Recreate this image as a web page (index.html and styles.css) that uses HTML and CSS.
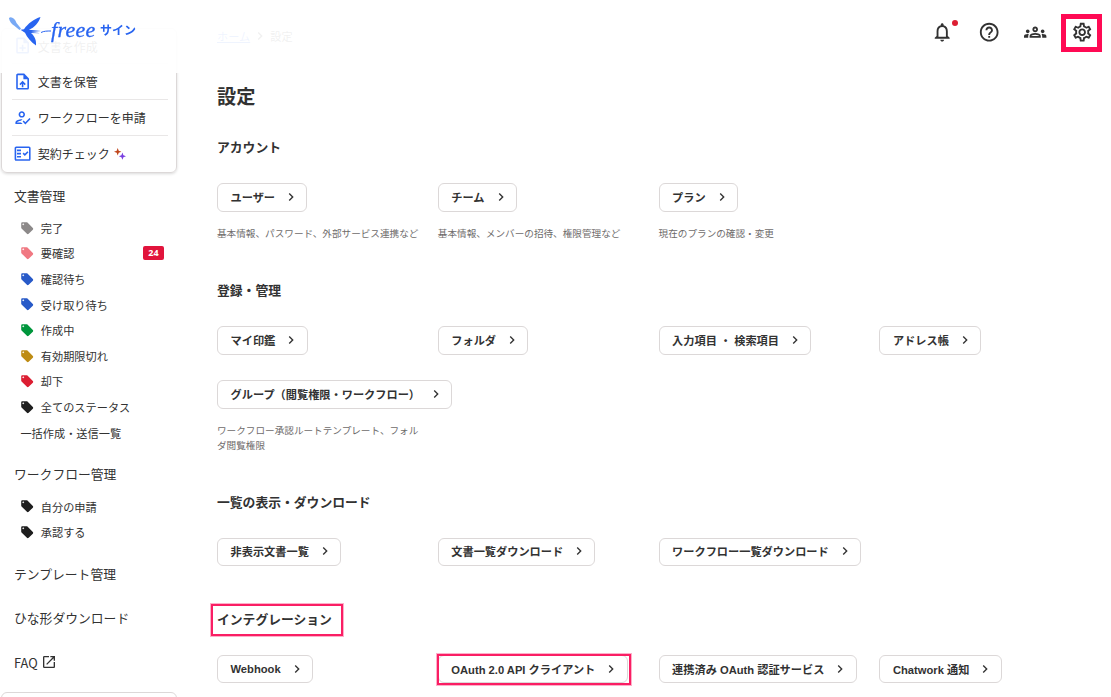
FILE: index.html
```
<!DOCTYPE html>
<html lang="ja">
<head>
<meta charset="UTF-8">
<title>設定 | freee サイン</title>
<link rel="stylesheet" href="styles.css">
</head>
<body>
<svg class="sprite" width="0" height="0">
	<symbol id="tag" viewBox="0 0 24 24"><path d="M21.41 11.58l-9-9C12.05 2.22 11.55 2 11 2H4c-1.1 0-2 .9-2 2v7c0 .55.22 1.05.59 1.42l9 9c.36.36.86.58 1.41.58s1.05-.22 1.41-.59l7-7c.37-.36.59-.86.59-1.41s-.23-1.06-.59-1.42zM5.5 7C4.67 7 4 6.33 4 5.5S4.67 4 5.5 4 7 4.67 7 5.5 6.33 7 5.5 7z"/></symbol>
	<symbol id="arrow" viewBox="0 0 24 24"><path d="M10 6L8.59 7.41 13.17 12l-4.58 4.59L10 18l6-6z"/></symbol>
	<symbol id="create" viewBox="0 0 24 24"><path d="M14 2H6c-1.1 0-2 .9-2 2v16c0 1.1.9 2 2 2h12c1.1 0 2-.9 2-2V8l-6-6zm4 18H6V4h7v5h5v11zM11 11h2v3h3v2h-3v3h-2v-3H8v-2h3z"/></symbol>
	<symbol id="upload" viewBox="0 0 24 24"><path d="M14 2H6c-1.1 0-1.99.9-1.99 2L4 20c0 1.1.89 2 1.99 2H18c1.1 0 2-.9 2-2V8l-6-6zm4 18H6V4h7v5h5v11zM8 15.01l1.41 1.41L11 14.84V19h2v-4.16l1.59 1.59L16 15.01 12.01 11 8 15.01z"/></symbol>
	<symbol id="apply" viewBox="0 0 24 24"><path d="M11 12c2.21 0 4-1.79 4-4s-1.79-4-4-4-4 1.79-4 4 1.79 4 4 4zm0-6c1.1 0 2 .9 2 2s-.9 2-2 2-2-.9-2-2 .9-2 2-2zM5 18c.2-.63 2.57-1.68 4.96-1.94l2.04-2c-.39-.04-.68-.06-1-.06-2.67 0-8 1.34-8 4v2h9l-2-2H5zm15.6-5.5l-5.13 5.17-2.07-2.08L12 17l3.47 3.5L22 13.91z"/></symbol>
	<symbol id="check" viewBox="0 0 24 24"><path d="M20 3H4c-1.1 0-2 .9-2 2v14c0 1.1.9 2 2 2h16c1.1 0 2-.9 2-2V5c0-1.1-.9-2-2-2zm0 16H4V5h16v14zM19.41 10.42L17.99 9l-3.17 3.17-1.41-1.42L12 12.16 14.82 15zM5 7h5v2H5zM5 11h5v2H5zM5 15h5v2H5z"/></symbol>
</svg>

<header class="header">
	<a class="logo">
		<svg class="bird" viewBox="0 0 42 32" width="42" height="32">
			<path fill="#78a9f5" d="M0 3C2 1 6 3.500 7.500 8l4.500 5.500-1.500 1.500L5 10.500C2.500 9 .5 6 0 3.500z"/>
			<path fill="#2864f0" d="M11.500 14.800L15 14.200C19 8.500 25 4 31.500 2 29.500 8 25.500 12.500 20 14.800l12 1.200-10 1 10 1.200-10-.2c4 3.500 5.500 7.500 5 12.500C22 27 18 22.500 16 17.800z"/>
			<path fill="none" stroke="#2864f0" stroke-width="1" d="M32 17.500c3-1.500 6-1.500 10-1.500"/>
		</svg>
		<span class="logo-name">freee</span>
		<span class="logo-sub">サイン</span>
	</a>
	<nav class="tools">
		<span class="tool">
			<svg viewBox="0 0 24 24"><path d="M12 22c1.1 0 2-.9 2-2h-4c0 1.1.89 2 2 2zm6-6v-5c0-3.07-1.64-5.64-4.5-6.32V4c0-.83-.67-1.5-1.5-1.5s-1.5.67-1.5 1.5v.68C7.63 5.36 6 7.92 6 11v5l-2 2v1h16v-1l-2-2zm-2 1H8v-6c0-2.48 1.51-4.5 4-4.5s4 2.02 4 4.5v6z"/></svg>
			<i class="dot"></i>
		</span>
		<span class="tool">
			<svg viewBox="0 0 24 24"><path d="M11 18h2v-2h-2v2zm1-16C6.48 2 2 6.48 2 12s4.48 10 10 10 10-4.48 10-10S17.52 2 12 2zm0 18c-4.41 0-8-3.59-8-8s3.59-8 8-8 8 3.59 8 8-3.59 8-8 8zm0-14c-2.21 0-4 1.79-4 4h2c0-1.1.9-2 2-2s2 .9 2 2c0 2-3 1.75-3 5h2c0-2.25 3-2.5 3-5 0-2.21-1.79-4-4-4z"/></svg>
		</span>
		<span class="tool">
			<svg viewBox="0 0 24 24"><path d="M4 13c1.1 0 2-.9 2-2s-.9-2-2-2-2 .9-2 2 .9 2 2 2zm1.13 1.1c-.37-.06-.74-.1-1.13-.1-.99 0-1.93.21-2.78.58C.48 14.9 0 15.62 0 16.43V18h4.5v-1.61c0-.83.23-1.61.63-2.29zM20 13c1.1 0 2-.9 2-2s-.9-2-2-2-2 .9-2 2 .9 2 2 2zm4 3.43c0-.81-.48-1.53-1.22-1.85-.85-.37-1.79-.58-2.78-.58-.39 0-.76.04-1.13.1.4.68.63 1.46.63 2.29V18H24v-1.57zM16.24 13.65c-1.17-.52-2.61-.9-4.24-.9s-3.07.39-4.24.9C6.68 14.13 6 15.21 6 16.39V18h12v-1.61c0-1.18-.68-2.26-1.76-2.74zM8.07 16c.09-.23.13-.39.91-.69.97-.38 1.99-.56 3.02-.56s2.05.18 3.02.56c.77.3.81.46.91.69H8.07zM12 8c.55 0 1 .45 1 1s-.45 1-1 1-1-.45-1-1 .45-1 1-1m0-2c-1.66 0-3 1.34-3 3s1.34 3 3 3 3-1.34 3-3-1.34-3-3-3z"/></svg>
		</span>
		<span class="tool">
			<svg viewBox="0 0 24 24"><path d="M19.43 12.98c.04-.32.07-.64.07-.98 0-.34-.03-.66-.07-.98l2.11-1.65c.19-.15.24-.42.12-.64l-2-3.46c-.09-.16-.26-.25-.44-.25-.06 0-.12.01-.17.03l-2.49 1c-.52-.4-1.08-.73-1.69-.98l-.38-2.65C14.46 2.18 14.25 2 14 2h-4c-.25 0-.46.18-.49.42l-.38 2.65c-.61.25-1.17.59-1.69.98l-2.49-1c-.06-.02-.12-.03-.18-.03-.17 0-.34.09-.43.25l-2 3.46c-.13.22-.07.49.12.64l2.11 1.65c-.04.32-.07.65-.07.98 0 .33.03.66.07.98l-2.11 1.65c-.19.15-.24.42-.12.64l2 3.46c.09.16.26.25.44.25.06 0 .12-.01.17-.03l2.49-1c.52.4 1.08.73 1.69.98l.38 2.65c.03.24.24.42.49.42h4c.25 0 .46-.18.49-.42l.38-2.65c.61-.25 1.17-.59 1.69-.98l2.49 1c.06.02.12.03.18.03.17 0 .34-.09.43-.25l2-3.46c.12-.22.07-.49-.12-.64l-2.11-1.65zm-1.98-1.71c.04.31.05.52.05.73 0 .21-.02.43-.05.73l-.14 1.13.89.7 1.08.84-.7 1.21-1.27-.51-1.04-.42-.9.68c-.43.32-.84.56-1.25.73l-1.06.43-.16 1.13-.2 1.35h-1.4l-.19-1.35-.16-1.13-1.06-.43c-.43-.18-.83-.41-1.23-.71l-.91-.7-1.06.43-1.27.51-.7-1.21 1.08-.84.89-.7-.14-1.13c-.03-.31-.05-.54-.05-.74s.02-.43.05-.73l.14-1.13-.89-.7-1.08-.84.7-1.21 1.27.51 1.04.42.9-.68c.43-.32.84-.56 1.25-.73l1.06-.43.16-1.13.2-1.35h1.39l.19 1.35.16 1.13 1.06.43c.43.18.83.41 1.23.71l.91.7 1.06-.43 1.27-.51.7 1.21-1.07.85-.89.7.14 1.13zM12 8c-2.21 0-4 1.79-4 4s1.79 4 4 4 4-1.79 4-4-1.79-4-4-4zm0 6c-1.1 0-2-.9-2-2s.9-2 2-2 2 .9 2 2-.9 2-2 2z"/></svg>
			<i class="mark mark-gear"></i>
		</span>
	</nav>
</header>

<div class="page">
	<aside class="sidebar">
		<ul class="quick">
			<li><svg><use href="#create"/></svg>文書を作成</li>
			<li><svg><use href="#upload"/></svg>文書を保管</li>
			<li><svg><use href="#apply"/></svg>ワークフローを申請</li>
			<li><svg><use href="#check"/></svg>契約チェック
				<svg class="spark" viewBox="0 0 12 12"><path fill="#c0461c" d="M3.7 0l1 2.7 2.7 1-2.7 1-1 2.7-1-2.7-2.700-1 2.700-1z"/><path fill="#7a3fe0" d="M8.4 4.6l1 2.6 2.6 1-2.6 1-1 2.6-1-2.6-2.6-1 2.6-1z"/></svg>
			</li>
		</ul>

		<h3 class="menu-title">文書管理</h3>
		<ul class="menu">
			<li><svg class="gray"><use href="#tag"/></svg>完了</li>
			<li><svg class="pink"><use href="#tag"/></svg>要確認<span class="count">24</span></li>
			<li><svg class="blue"><use href="#tag"/></svg>確認待ち</li>
			<li><svg class="blue"><use href="#tag"/></svg>受け取り待ち</li>
			<li><svg class="green"><use href="#tag"/></svg>作成中</li>
			<li><svg class="gold"><use href="#tag"/></svg>有効期限切れ</li>
			<li><svg class="red"><use href="#tag"/></svg>却下</li>
			<li><svg><use href="#tag"/></svg>全てのステータス</li>
			<li>一括作成・送信一覧</li>
		</ul>

		<h3 class="menu-title">ワークフロー管理</h3>
		<ul class="menu">
			<li><svg><use href="#tag"/></svg>自分の申請</li>
			<li><svg><use href="#tag"/></svg>承認する</li>
		</ul>

		<h3 class="menu-title">テンプレート管理</h3>
		<h3 class="menu-title">ひな形ダウンロード</h3>
		<h3 class="menu-title">FAQ
			<svg viewBox="0 0 24 24"><path d="M19 19H5V5h7V3H5a2 2 0 0 0-2 2v14a2 2 0 0 0 2 2h14c1.1 0 2-.9 2-2v-7h-2v7zM14 3v2h3.59l-9.83 9.83 1.41 1.41L19 6.41V10h2V3h-7z"/></svg>
		</h3>
		<div class="bottom-card"></div>
	</aside>

	<main class="main">
		<div class="breadcrumb">
			<a>ホーム</a><svg><use href="#arrow"/></svg><span>設定</span>
		</div>
		<h1>設定</h1>

		<section>
			<h2>アカウント</h2>
			<div class="grid">
				<div class="cell">
					<a class="btn">ユーザー<svg><use href="#arrow"/></svg></a>
					<p>基本情報、パスワード、外部サービス連携など</p>
				</div>
				<div class="cell">
					<a class="btn">チーム<svg><use href="#arrow"/></svg></a>
					<p>基本情報、メンバーの招待、権限管理など</p>
				</div>
				<div class="cell">
					<a class="btn">プラン<svg><use href="#arrow"/></svg></a>
					<p>現在のプランの確認・変更</p>
				</div>
			</div>
		</section>

		<section>
			<h2>登録・管理</h2>
			<div class="grid">
				<div class="cell"><a class="btn">マイ印鑑<svg><use href="#arrow"/></svg></a></div>
				<div class="cell"><a class="btn">フォルダ<svg><use href="#arrow"/></svg></a></div>
				<div class="cell"><a class="btn">入力項目 ・ 検索項目<svg><use href="#arrow"/></svg></a></div>
				<div class="cell"><a class="btn">アドレス帳<svg><use href="#arrow"/></svg></a></div>
				<div class="cell">
					<a class="btn">グループ（閲覧権限・ワークフロー）<svg><use href="#arrow"/></svg></a>
					<p>ワークフロー承認ルートテンプレート、フォルダ閲覧権限</p>
				</div>
			</div>
		</section>

		<section>
			<h2>一覧の表示・ダウンロード</h2>
			<div class="grid">
				<div class="cell"><a class="btn">非表示文書一覧<svg><use href="#arrow"/></svg></a></div>
				<div class="cell"><a class="btn">文書一覧ダウンロード<svg><use href="#arrow"/></svg></a></div>
				<div class="cell"><a class="btn">ワークフロー一覧ダウンロード<svg><use href="#arrow"/></svg></a></div>
			</div>
		</section>

		<section>
			<h2>インテグレーション<i class="mark mark-title"></i></h2>
			<div class="grid">
				<div class="cell"><a class="btn">Webhook<svg><use href="#arrow"/></svg></a></div>
				<div class="cell"><a class="btn">OAuth 2.0 API クライアント<svg><use href="#arrow"/></svg><i class="mark mark-btn"></i></a></div>
				<div class="cell"><a class="btn">連携済み OAuth 認証サービス<svg><use href="#arrow"/></svg></a></div>
				<div class="cell"><a class="btn">Chatwork 通知<svg><use href="#arrow"/></svg></a></div>
			</div>
		</section>
	</main>
</div>
</body>
</html>
```

FILE: styles.css
```
* {
	box-sizing: border-box;
}
body {
	margin: 0;
	height: 697px;
	overflow: hidden;
	background: #fff;
	color: #323232;
	font-family: "Liberation Sans", "Noto Sans CJK JP", sans-serif;
}
h1, h2, h3, p, ul {
	margin: 0;
	padding: 0;
}
ul {
	list-style: none;
}
svg {
	flex: none;
	fill: currentColor;
}
.sprite {
	position: absolute;
}

/* header lies over the scrolled page */
.header {
	position: fixed;
	z-index: 2;
	top: 0;
	left: 0;
	width: 100%;
	height: 73px;
	padding: 0 18px 9px 9px;
	display: flex;
	justify-content: space-between;
	align-items: center;
	background: rgba(255, 255, 255, .93);
}
.logo {
	display: flex;
	align-items: center;
	height: 32px;
	margin-top: -2px;
	color: #2864f0;
}
.logo-name {
	width: 49px;
	font: italic 22px/22px "Liberation Serif", serif;
	letter-spacing: .3px;
	-webkit-text-stroke: .3px #2864f0;
	margin-top: -3px;
}
.logo-sub {
	font-size: 12px;
	line-height: 16px;
	font-weight: bold;
}
.tools {
	display: flex;
	gap: 24px;
}
.tool {
	position: relative;
	height: 22.4px;
}
.tool svg {
	width: 22.4px;
	height: 22.4px;
}
.dot {
	position: absolute;
	top: -1px;
	right: -4px;
	width: 6px;
	height: 6px;
	border-radius: 50%;
	background: #dc1e32;
}
.mark {
	position: absolute;
	border: 2px solid #fa1e64;
	box-shadow: 0 0 0 1px rgba(250, 30, 100, .35);
}
.mark-gear {
	inset: -7px -9px -9px -10px;
	border: 5px solid #ff0a54;
	box-shadow: none;
}
.mark-title {
	inset: -6px -11px -6px -6px;
}
.mark-btn {
	inset: -2px -4px -3px -2px;
}

.page {
	display: flex;
}

/* sidebar */
.sidebar {
	width: 217px;
	padding: 28px 40px 0 1px;
	font-family: "Noto Sans CJK JP", sans-serif;
}
.quick {
	height: 145px;
	padding: 0 8px 0 10px;
	border: 1px solid #dcd8d8;
	border-radius: 6px;
	box-shadow: 0 1px 3px rgba(0, 0, 0, .15);
}
.quick li {
	display: flex;
	align-items: center;
	height: 36px;
	border-bottom: 1px solid #e9e7e7;
	font-size: 12px;
}
.quick li:first-child {
	height: 35px;
}
.quick li:last-child {
	height: 35px;
	border-bottom: 0;
}
.quick svg {
	width: 19.2px;
	height: 19.2px;
	margin: 0 6px 0 .5px;
	color: #2864f0;
}
.quick .spark {
	width: 12px;
	height: 12px;
	margin-left: 4px;
}
.menu-title {
	display: flex;
	align-items: center;
	height: 24px;
	margin: 0 0 20.4px 13px;
	font-size: 12.8px;
	font-weight: normal;
}
.quick + .menu-title {
	margin-top: 10px;
}
.menu-title:has(+ .menu) {
	margin-bottom: 8px;
}
.menu-title svg {
	width: 16px;
	height: 16px;
	margin: 0 0 0 3px;
}
.menu {
	margin-bottom: 16.4px;
	padding: 0 13px 0 19.4px;
}
.menu li {
	display: flex;
	align-items: center;
	height: 25.6px;
	font-size: 11.2px;
}
.menu svg {
	width: 14.4px;
	height: 14.4px;
	margin-right: 6px;
	color: #1e1e1e;
}
.menu .gray { color: #8c8989; }
.menu .pink { color: #f07882; }
.menu .blue { color: #285ac8; }
.menu .green { color: #00963c; }
.menu .gold { color: #be8c14; }
.menu .red { color: #dc1e32; }
.count {
	width: 21px;
	margin-left: auto;
	border-radius: 2px;
	background: #e1143c;
	color: #fff;
	font: bold 9px/14px "Noto Sans", sans-serif;
	text-align: center;
}
.bottom-card {
	height: 40px;
	margin-top: -2.4px;
	border: 1px solid #dcd8d8;
	border-radius: 6px;
}

/* settings */
.main {
	flex: 1;
	padding-top: 26px;
}
.breadcrumb {
	display: flex;
	align-items: center;
	height: 20px;
	font-size: 11.2px;
}
.breadcrumb a {
	color: #2864f0;
	text-decoration: underline;
}
.breadcrumb svg {
	width: 16px;
	height: 16px;
	margin: 0 2px;
}
h1 {
	height: 30px;
	margin: 37px 0 25px;
	font-size: 19.2px;
	line-height: 30px;
}
section {
	padding-bottom: 43.3px;
}
h2 {
	position: relative;
	width: fit-content;
	height: 20px;
	margin-bottom: 25px;
	font-size: 12.8px;
	line-height: 20px;
}
.grid {
	display: grid;
	grid-template-columns: repeat(4, 220.8px);
	row-gap: 25.2px;
}
.cell {
	width: 203px;
}
.btn {
	position: relative;
	display: inline-flex;
	align-items: center;
	height: 28.8px;
	padding: 0 7.3px 1px 12.5px;
	border: 1px solid #dcd8d8;
	border-radius: 6px;
	font-size: 11.2px;
	font-weight: bold;
	white-space: nowrap;
	vertical-align: top;
}
.btn svg {
	width: 16px;
	height: 16px;
	margin-left: 8px;
}
.cell p {
	margin: 15.6px 0 -4px;
	color: #6e6b6b;
	font-size: 9.62px;
	line-height: 14.4px;
}
```
